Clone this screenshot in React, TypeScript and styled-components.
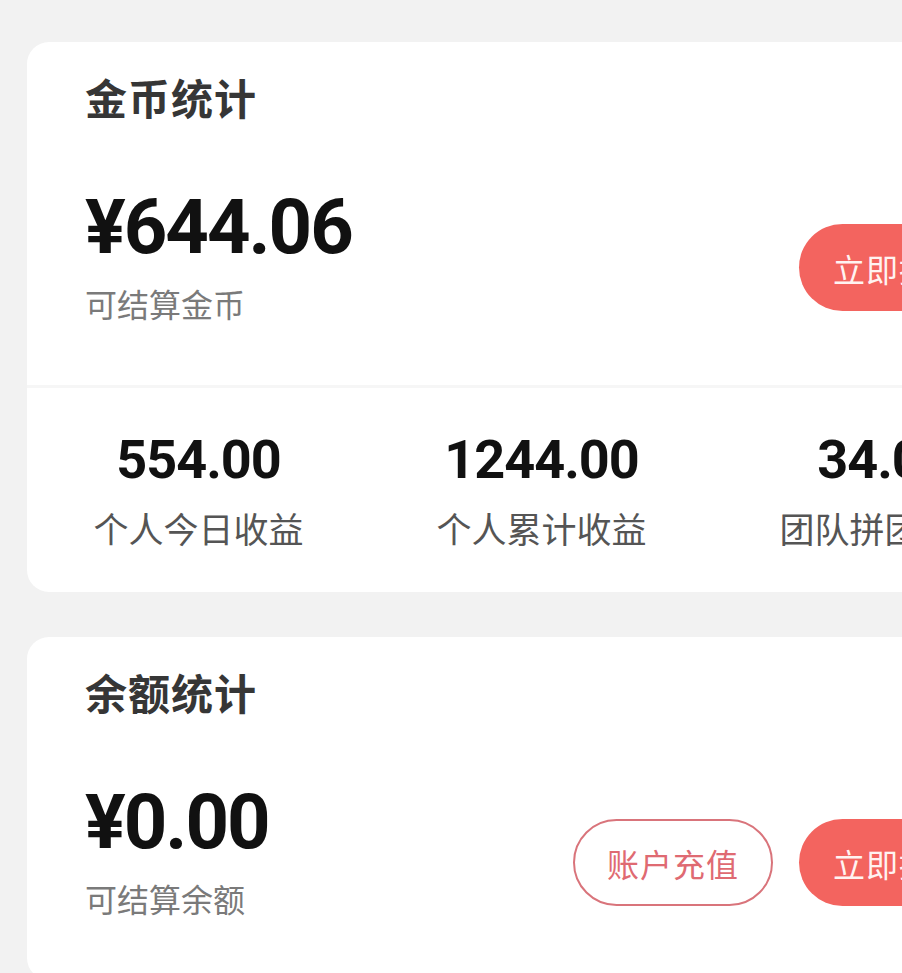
import React from "react";
import styled, { createGlobalStyle } from "styled-components";

const GlobalStyle = createGlobalStyle`
  html, body {
    margin: 0;
    padding: 0;
    overflow: hidden;
    background: #f2f2f2;
  }
  body {
    font-family: "Noto Sans CJK SC", "Noto Sans", sans-serif;
  }
`;

const Page = styled.div`
  width: 1083px;
  box-sizing: border-box;
  padding: 42px 27px 40px;
  display: flex;
  flex-direction: column;
  gap: 45px;
  background: #f2f2f2;
`;

const Card = styled.section`
  background: #ffffff;
  border-radius: 22px;
  overflow: hidden;
  display: flex;
  flex-direction: column;
`;

const TopSection = styled.div`
  padding: 34px 57px 66px 58px;
  display: flex;
  flex-direction: column;
  gap: 71px;
`;

const Title = styled.h2`
  margin: 0;
  font-family: "Noto Sans CJK SC", sans-serif;
  font-size: 42px;
  line-height: 42px;
  font-weight: 700;
  color: #363636;
  letter-spacing: 1px;
`;

const AmountRow = styled.div`
  display: flex;
  align-items: flex-end;
  justify-content: space-between;
`;

const AmountBlock = styled.div`
  display: flex;
  flex-direction: column;
  gap: 22px;
`;

const Amount = styled.div`
  font-family: Roboto, "Liberation Sans", sans-serif;
  font-size: 76px;
  line-height: 76px;
  font-weight: 700;
  color: #111111;
  letter-spacing: -2px;
`;

const SubLabel = styled.div`
  font-family: "Noto Sans CJK SC", sans-serif;
  font-size: 32px;
  line-height: 32px;
  color: #7a7a7a;
`;

const Actions = styled.div`
  display: flex;
  gap: 26px;
  margin-bottom: 8px;
`;

const Button = styled.button<{ $variant: "solid" | "outline" }>`
  width: 200px;
  height: 87px;
  box-sizing: border-box;
  border-radius: 44px;
  font-family: "Noto Sans CJK SC", sans-serif;
  font-size: 32px;
  letter-spacing: 1px;
  display: flex;
  align-items: center;
  justify-content: center;
  padding: 0;
  cursor: pointer;
  background: ${(p) => (p.$variant === "solid" ? "#f3645f" : "#ffffff")};
  color: ${(p) => (p.$variant === "solid" ? "#fff3f1" : "#df6a72")};
  border: ${(p) => (p.$variant === "solid" ? "none" : "2px solid #d9747b")};
`;

const Divider = styled.div`
  height: 3px;
  background: #f6f6f6;
`;

const Stats = styled.div`
  display: grid;
  grid-template-columns: repeat(3, 1fr);
  padding: 45px 0 47px;
`;

const Stat = styled.div`
  display: flex;
  flex-direction: column;
  align-items: center;
  gap: 23px;
`;

const StatValue = styled.div`
  font-family: Roboto, "Liberation Sans", sans-serif;
  font-size: 54px;
  line-height: 54px;
  font-weight: 700;
  color: #111111;
  letter-spacing: -1px;
`;

const StatLabel = styled.div`
  font-family: "Noto Sans CJK SC", sans-serif;
  font-size: 35px;
  line-height: 35px;
  color: #555555;
`;

const stats = [
  { value: "554.00", label: "个人今日收益" },
  { value: "1244.00", label: "个人累计收益" },
  { value: "34.00", label: "团队拼团收益" },
];

export default function App() {
  return (
    <>
      <GlobalStyle />
      <Page>
        <Card>
          <TopSection>
            <Title>金币统计</Title>
            <AmountRow>
              <AmountBlock>
                <Amount>¥644.06</Amount>
                <SubLabel>可结算金币</SubLabel>
              </AmountBlock>
              <Actions>
                <Button $variant="solid">立即提现</Button>
              </Actions>
            </AmountRow>
          </TopSection>
          <Divider />
          <Stats>
            {stats.map((s) => (
              <Stat key={s.label}>
                <StatValue>{s.value}</StatValue>
                <StatLabel>{s.label}</StatLabel>
              </Stat>
            ))}
          </Stats>
        </Card>
        <Card>
          <TopSection>
            <Title>余额统计</Title>
            <AmountRow>
              <AmountBlock>
                <Amount>¥0.00</Amount>
                <SubLabel>可结算余额</SubLabel>
              </AmountBlock>
              <Actions>
                <Button $variant="outline">账户充值</Button>
                <Button $variant="solid">立即提现</Button>
              </Actions>
            </AmountRow>
          </TopSection>
        </Card>
      </Page>
    </>
  );
}
